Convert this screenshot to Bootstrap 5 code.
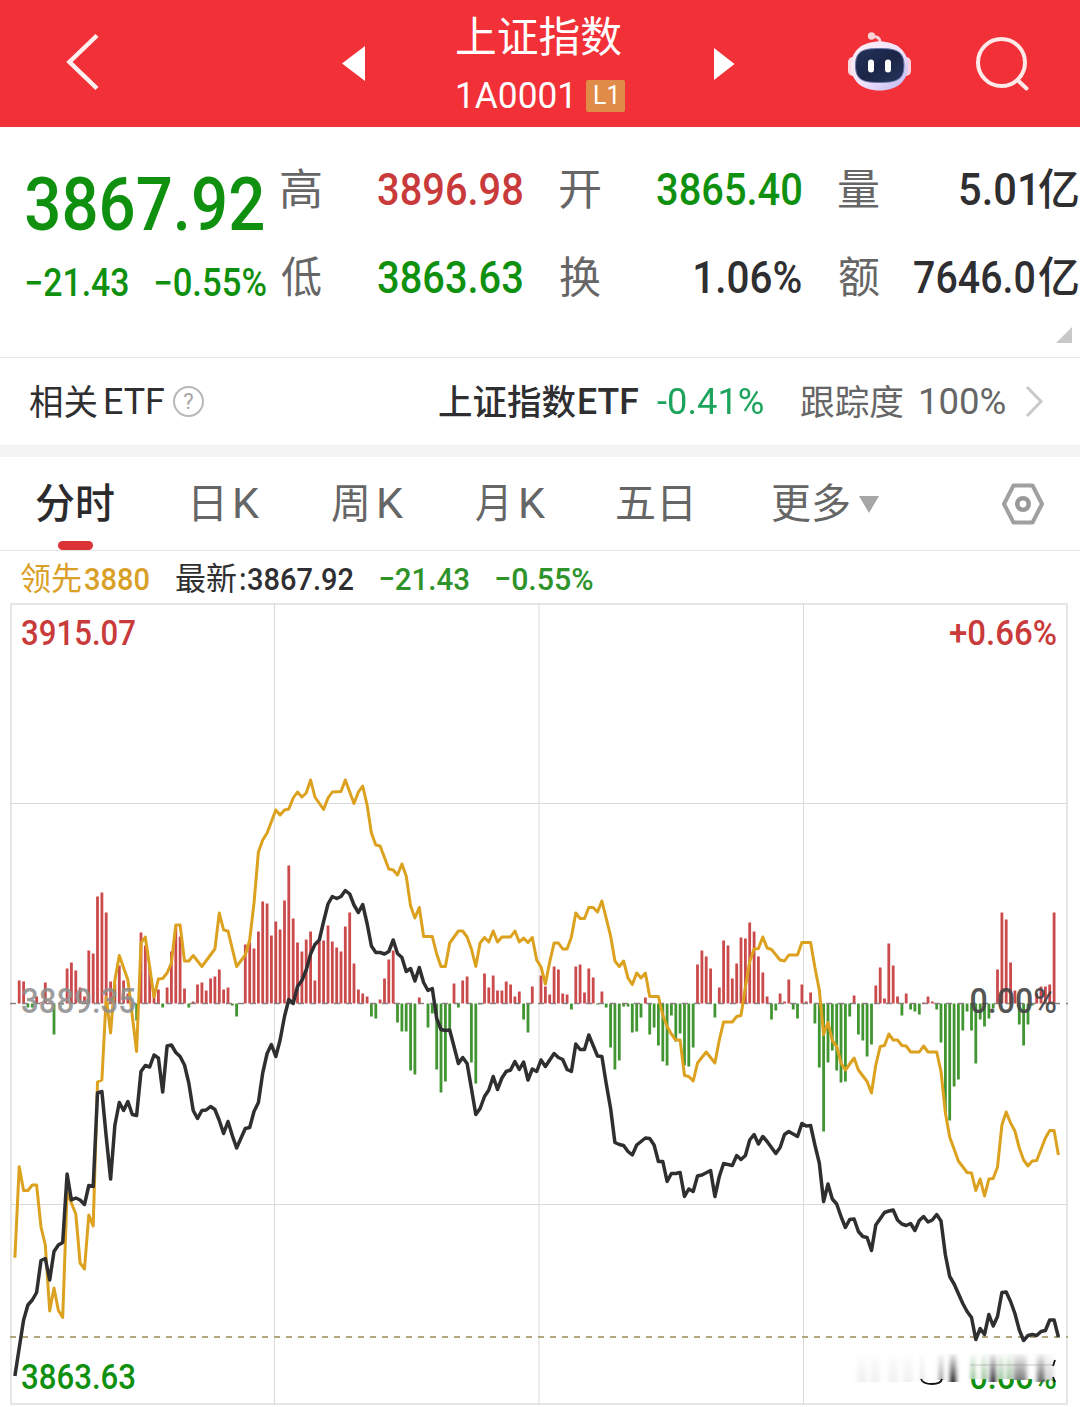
<!DOCTYPE html>
<html lang="zh-CN">
<head>
<meta charset="utf-8">
<meta name="viewport" content="width=device-width, initial-scale=1">
<title>上证指数 1A0001</title>
<link href="https://cdn.jsdelivr.net/npm/bootstrap@5.3.0/dist/css/bootstrap.min.css" rel="stylesheet">
<style>
  body { width: 1080px; height: 1407px; overflow: hidden; background: #fff; color: #2f2f31; font-family: Roboto, "Noto Sans CJK SC", sans-serif; }
  svg { display: block; flex: none; }
  .fit { display: block; flex: none; white-space: nowrap; line-height: 1.2; }
  .fit > span { display: inline-block; transform-origin: 0 50%; }
  .zh { font-family: "Noto Sans CJK SC", sans-serif; }
  .up { color: #c93a3b; }
  .down { color: #0f900f; }
  .muted { color: #666; }
  .topbar { height: 127px; background: #f23038; color: #fff; }
  .title-row { height: 74px; font-size: 42px; }
  .code-row { height: 46px; font-size: 36px; }
  .level { width: 40px; height: 32px; border-radius: 2px; background: #e08b47; font-size: 26px; margin-left: 16px; margin-top: -3px; }
  .quote { height: 230px; }
  .last-col { width: 281px; padding: 31px 0 0 26px; }
  .last-price { height: 92px; font-size: 75px; font-weight: 500; }
  .last-change { height: 68px; font-size: 38px; font-weight: 500; }
  .pair { height: 88px; font-size: 44px; font-weight: 500; }
  .pair .zh { font-size: 43px; font-weight: 400; }
  .stats { padding-top: 19px; }
  .stat-col { width: 241px; margin-right: 38px; }
  .corner { position: absolute; right: 8px; bottom: 14px; width: 16px; height: 16px; background: #c8c8c8; clip-path: polygon(100% 0, 100% 100%, 0 100%); }
  .etf { height: 88px; border-top: 1px solid #e9e9e9; font-size: 36px; padding: 3px 0 0 30px; }
  .etf .zh { font-size: 35px; }
  .help { width: 31px; height: 31px; border: 2px solid #b8b8b8; border-radius: 50%; color: #a5a5a5; font-size: 22px; margin: -3px 0 0 9px; }
  .band { height: 12px; background: #f4f4f4; }
  .tabs { height: 94px; border-bottom: 1px solid #e4e4e4; font-size: 43px; padding: 1px 0 0 36px; position: relative; }
  .tabs .zh { font-size: 41px; }
  .active-bar { position: absolute; left: 58px; bottom: 0; width: 35px; height: 9px; border-radius: 5px; background: #db3335; }
  .legend-row { height: 49px; padding: 7px 0 0 21px; font-size: 32px; font-weight: 500; }
  .legend-row .zh { font-size: 32px; font-weight: 400; }
  .lead-line { color: #d9a028; }
  .chart text { font: 500 35px Roboto, sans-serif; }
</style>
<script src="https://cdn.jsdelivr.net/npm/bootstrap@5.3.0/dist/js/bootstrap.bundle.min.js"></script>
</head>
<body>
<header class="topbar d-flex">
  <svg width="34" height="127" viewBox="66 0 34 127" style="margin-left:66px"><path d="M97 35.500 69.500 62 97 88.500" fill="none" stroke="#fff0f0" stroke-width="4.500"/></svg>
  <svg width="24" height="127" viewBox="342 0 24 127" style="margin-left:242px"><path d="M342 63.500 365 46V81Z" fill="#fff"/></svg>
  <div style="margin-left:91px;width:168px">
    <div class="title-row d-flex align-items-center"><span class="fit zh" data-w="164">上证指数</span></div>
    <div class="code-row d-flex align-items-center"><span class="fit" data-w="112" style="margin-left:1px">1A0001</span><span class="level d-flex align-items-center justify-content-center"><span class="fit" data-w="21">L1</span></span></div>
  </div>
  <svg width="22" height="127" viewBox="713 0 22 127" style="margin-left:88px"><path d="M714 48V80L734.500 64Z" fill="#fff"/></svg>
  <svg width="66" height="127" viewBox="846 0 66 127" style="margin-left:111px">
    <defs>
      <linearGradient id="shell" x1="0" y1="0" x2="1" y2="1"><stop offset="0" stop-color="#fff0f4"/><stop offset=".55" stop-color="#efe2fa"/><stop offset="1" stop-color="#b9b4f4"/></linearGradient>
      <linearGradient id="visor" x1="0" y1="0" x2="1" y2="1"><stop offset="0" stop-color="#24345c"/><stop offset=".5" stop-color="#1b2547"/><stop offset="1" stop-color="#27365c"/></linearGradient>
    </defs>
    <path d="M872 36.500q8-1 8.500 7" fill="none" stroke="#f7cfd8" stroke-width="3"/>
    <circle cx="871.500" cy="36" r="3.700" fill="#fbd3d8"/>
    <rect x="848" y="57" width="10" height="19" rx="5" fill="#fbd9e2"/>
    <rect x="901" y="57" width="10" height="19" rx="5" fill="#fbd0e0"/>
    <path d="M879.500 41.500C897 41.500 908 51 908 66S897 90.500 879.500 90.500 851 81 851 66 862 41.500 879.500 41.500Z" fill="url(#shell)"/>
    <path d="M879.500 48.500C896 48.500 904 51 904 65.500S896 82.500 879.500 82.500 855.500 80 855.500 65.500 863 48.500 879.500 48.500Z" fill="url(#visor)" stroke="#6d77ad"/>
    <rect x="868" y="59.500" width="6" height="13" rx="3" fill="#fff"/><rect x="885" y="59.500" width="6" height="13" rx="3" fill="#fff"/>
  </svg>
  <svg width="58" height="127" viewBox="974 0 58 127" style="margin-left:62px"><g fill="none" stroke="#ffe9e9" stroke-width="4"><circle cx="1001.500" cy="62.500" r="23.500"/><path d="M1017.500 80 1026.500 88.500" stroke-linecap="round"/></g></svg>
</header>

<section class="quote d-flex position-relative">
  <div class="last-col down">
    <div class="last-price d-flex align-items-center"><span class="fit" data-w="237">3867.92</span></div>
    <div class="last-change d-flex align-items-center"><span class="fit" data-w="102">−21.43</span><span class="fit" data-w="111" style="margin-left:27px">−0.55%</span></div>
  </div>
  <div class="stats d-flex">
    <div class="stat-col">
      <div class="pair d-flex align-items-center justify-content-between"><span class="fit zh muted" data-w="40">高</span><span class="fit up" data-w="144">3896.98</span></div>
      <div class="pair d-flex align-items-center justify-content-between"><span class="fit zh muted" data-w="40">低</span><span class="fit down" data-w="144">3863.63</span></div>
    </div>
    <div class="stat-col">
      <div class="pair d-flex align-items-center justify-content-between"><span class="fit zh muted" data-w="40">开</span><span class="fit down" data-w="144">3865.40</span></div>
      <div class="pair d-flex align-items-center justify-content-between"><span class="fit zh muted" data-w="40">换</span><span class="fit" data-w="106">1.06%</span></div>
    </div>
    <div style="width:239px">
      <div class="pair d-flex align-items-center"><span class="fit zh muted me-auto" data-w="40">量</span><span class="fit" data-w="73">5.01</span><span class="fit zh" data-w="39" style="margin-left:6px;font-weight:500">亿</span></div>
      <div class="pair d-flex align-items-center"><span class="fit zh muted me-auto" data-w="40">额</span><span class="fit" data-w="120">7646.0</span><span class="fit zh" data-w="39" style="margin-left:5px;font-weight:500">亿</span></div>
    </div>
  </div>
  <i class="corner"></i>
</section>

<section class="etf d-flex align-items-center">
  <span class="fit zh" data-w="67">相关</span><span class="fit" data-w="59" style="margin-left:8px">ETF</span>
  <span class="help d-flex align-items-center justify-content-center">?</span>
  <span class="fit zh" data-w="137" style="margin-left:235px;font-weight:500">上证指数</span><span class="fit" data-w="59" style="margin-left:3px;font-weight:500">ETF</span>
  <span class="fit" data-w="106" style="margin-left:19px;color:#1da45c">-0.41%</span>
  <span class="fit zh muted" data-w="102" style="margin-left:38px">跟踪度</span><span class="fit muted" data-w="84" style="margin-left:18px">100%</span>
  <svg width="20" height="34" style="margin:-3px 0 0 20px"><path d="M2 2 16 16.500 2 31" fill="none" stroke="#c9c9c9" stroke-width="3"/></svg>
</section>
<div class="band"></div>

<nav class="tabs d-flex align-items-center muted">
  <span class="fit zh" data-w="78" style="color:#2b2b2d;font-weight:500">分时</span>
  <span class="fit zh" data-w="28" style="margin-left:80px">日</span><span class="fit" data-w="24" style="margin-left:13px">K</span>
  <span class="fit zh" data-w="35" style="margin-left:73px">周</span><span class="fit" data-w="24" style="margin-left:12px">K</span>
  <span class="fit zh" data-w="30" style="margin-left:73px">月</span><span class="fit" data-w="24" style="margin-left:15px">K</span>
  <span class="fit zh" data-w="74" style="margin-left:72px">五日</span>
  <span class="fit zh" data-w="77" style="margin-left:81px">更多</span>
  <svg width="20" height="17" style="margin-left:10px"><path d="M0 0H20L10 17Z" fill="#a6a6a6"/></svg>
  <svg width="44" height="42" viewBox="0 0 44 42" style="margin-left:122px"><path d="M12.500 2.500H31.500L41 21 31.500 39.500H12.500L3 21Z" fill="none" stroke="#a0a0a0" stroke-width="4" stroke-linejoin="round"/><circle cx="22" cy="21" r="5.700" fill="none" stroke="#989898" stroke-width="4.600"/></svg>
  <i class="active-bar"></i>
</nav>

<div class="legend-row d-flex align-items-center">
  <span class="fit zh lead-line" data-w="60">领先</span><span class="fit lead-line" data-w="64" style="margin-left:4px">3880</span>
  <span class="fit zh" data-w="60" style="margin-left:27px">最新</span><span class="fit" data-w="5" style="margin-left:4px">:</span><span class="fit" data-w="105" style="margin-left:3px">3867.92</span>
  <span class="fit" data-w="89" style="margin-left:27px;color:#2f932c">−21.43</span><span class="fit" data-w="97" style="margin-left:27px;color:#2f932c">−0.55%</span>
</div>

<svg class="chart" width="1080" height="807" viewBox="0 600 1080 807">
  <defs>
    <linearGradient id="fadeDown" x1="0" y1="0" x2="0" y2="1"><stop offset="0" stop-color="#fff"/><stop offset=".15" stop-color="#fff" stop-opacity=".9"/><stop offset="1" stop-color="#fff" stop-opacity="0"/></linearGradient>
    <filter id="soft" x="-5%" y="-5%" width="110%" height="110%"><feGaussianBlur stdDeviation="2.200 .3"/></filter>
  </defs>
  <rect x="11" y="604" width="1056" height="800" fill="none" stroke="#e6e6e6" stroke-width="2"/>
  <path d="M274.500 604V1404M539 604V1404M803.500 604V1404M11 803.500H1067M11 1204.500H1067" stroke="#dadada" stroke-width="1" fill="none"/>
  <path id="barsUp" stroke="#cb4a4c" stroke-width="2.800" fill="none"/>
  <path id="barsDown" stroke="#429632" stroke-width="2.800" fill="none"/>
  <path d="M10 1003.500H1068" stroke="#8b7f7f" stroke-width="1.500" stroke-dasharray="6 6"/>
  <path d="M10 1337H1068" stroke="#b3a67c" stroke-width="2" stroke-dasharray="6 6"/>
  <path id="leadPath" stroke="#dca21f" stroke-width="3" fill="none" stroke-linejoin="round"/>
  <path id="pricePath" stroke="#2f2f31" stroke-width="3.500" fill="none" stroke-linejoin="round"/>
  <text x="21" y="645" textLength="115" lengthAdjust="spacingAndGlyphs" fill="#c93a3b">3915.07</text>
  <text x="949" y="645" textLength="108" lengthAdjust="spacingAndGlyphs" fill="#c93a3b">+0.66%</text>
  <text x="21" y="1013" textLength="115" lengthAdjust="spacingAndGlyphs" fill="#8f8f8f" fill-opacity=".88">3889.35</text>
  <text x="969.500" y="1013" textLength="87.500" lengthAdjust="spacingAndGlyphs" fill="#444" fill-opacity=".93">0.00%</text>
  <text x="21" y="1389" textLength="115" lengthAdjust="spacingAndGlyphs" fill="#0f900f">3863.63</text>
  <text x="969.500" y="1389" textLength="87.500" lengthAdjust="spacingAndGlyphs" fill="#0f900f">0.66%</text>
  <rect x="968" y="1352" width="90" height="27" fill="#fff"/>
  <g filter="url(#soft)">
    <path d="M862 1354V1382M875 1354V1382M893 1354V1382M908 1354V1382" stroke="#f0f0f0" stroke-width="9"/>
    <path d="M922 1354V1380" stroke="#ccc" stroke-width="2"/><path d="M941 1354V1380" stroke="#666" stroke-width="3"/>
    <path d="M953 1354V1382" stroke="#222" stroke-width="6"/>
    <path d="M973 1354V1379M984 1354V1379M1001 1354V1379M1009 1354V1379" stroke="#5fa05f" stroke-width="3.500"/>
    <path d="M993 1354V1382" stroke="#2b2530" stroke-width="6"/>
    <path d="M1020 1354V1380" stroke="#777" stroke-width="13"/>
    <path d="M1041 1354V1382" stroke="#666" stroke-width="8"/><path d="M1050 1354V1380" stroke="#ccc" stroke-width="6"/>
  </g>
  <rect x="850" y="1350" width="208" height="31" fill="url(#fadeDown)"/>
  <path d="M921 1379Q923 1384 932 1384T942 1379" stroke="#111" stroke-width="1.800" fill="none"/>
  <path d="M970 1365H1052" stroke="#777" stroke-opacity=".25" stroke-width="1.500"/>
  <path d="M1055 1360 1053 1366M1053 1377 1055 1382" stroke="#111" stroke-width="1.800"/>
</svg>

<script>
  // Minute volume strength, one value per minute: positive above the axis, negative below.
  const bars = [0,23,22,-4,-4,7,1,21,1,-31,0,-1,35,41,33,16,7,53,50,107,111,91,22,20,38,23,10,-3,-17,71,58,37,12,14,-4,16,52,77,67,15,-4,2,19,21,13,25,27,34,14,16,-2,-13,0,59,61,55,72,102,100,68,
    82,74,103,138,85,61,52,64,72,23,62,63,78,62,56,52,77,91,40,14,10,7,-13,-15,4,25,44,53,-19,-28,-28,-67,-71,6,0,-24,-10,-66,-89,-78,-28,20,-4,23,27,-59,-80,-1,30,16,28,13,13,22,19,7,12,-16,-29,17,
    0,28,17,9,37,34,10,9,-6,37,39,11,35,26,-1,12,-4,-44,-66,-57,-3,-3,-29,-28,-14,6,-31,-24,-42,-58,-62,-12,-38,-30,-62,-63,-44,39,53,47,35,-14,16,63,58,25,40,66,65,81,72,47,31,7,-16,-7,10,2,24,-6,
    -15,19,2,11,-20,-64,-128,-59,-47,-67,-79,-78,-13,8,-31,-37,-53,-41,18,36,5,60,38,7,-12,10,-6,-8,-11,1,7,2,-6,-39,-110,-117,-83,-76,-27,-8,-27,-60,-16,-23,-15,-5,34,91,84,41,13,-21,-42,-21,-2,10,17,17,19,91];
  // Lines are "minute:level" pairs.
  const lead = "0:1257.7 1:1166.7 2:1190.5 3:1190.5 4:1185 5:1185 6:1227 7:1245 8:1311 9:1288 10:1310.5 11:1317.5 12:1192 13:1203 14:1214 15:1263 16:1269 17:1215 18:1226 19:1082 20:1080 21:997 22:1033 23:980 24:955.5 26:980 28:1051.5 29:943 30:937 32:997 33:979 34:978.5 35:973 36:963 37:925 38:925 39:961 40:961 41:955.5 43:966.5 46:949 47:913 48:930 49:931 51:966.5 53:955 54:940 55:903 56:852 57:840 58:833 60:810 61:815 62:810 63:809 64:798 65:792 66:797 67:793 68:780 69:797 71:809.5 72:798 73:792 75:791.5 76:780 78:803.5 79:792 80:786 81:805 82:833 83:845 84:846 86:869 87:870 88:875 89:864 90:876 91:906 92:918 93:907.5 94:936.5 96:936.5 97:954 98:966.5 99:966.5 100:943 102:931 103:931 104:937 105:949 106:966.5 107:943 108:937.5 109:942 110:931 111:942 112:937 114:937 115:931 116:942 117:938 118:942.5 119:937.5 120:960 121:967 122:984 123:962 124:943 125:943 126:949 127:949 128:937 129:913 130:918.5 131:918.5 132:907.5 133:907.5 134:912 135:901 137:936 138:961 139:966.5 140:961 141:978 142:984.5 143:973 144:978 145:973 146:996.5 148:996.5 149:1015 150:1026.5 151:1034 152:1040 153:1040 154:1075.5 155:1076.5 156:1081 157:1063 159:1052 161:1063 162:1040 163:1022 165:1022 166:1016.5 167:1015.5 168:987 169:961.5 170:949 171:948.5 172:937 173:948 174:949.5 176:960 177:961 178:955 180:955 181:942.5 183:942.5 184:967.5 185:990 186:1034.5 187:1022.5 188:1040.5 189:1046.5 190:1063 191:1070 193:1058 194:1070 196:1081.5 197:1093 198:1065 199:1046.5 200:1045.5 201:1034 202:1040 203:1040 204:1045.5 205:1046 206:1052 208:1052 209:1046 210:1052 212:1052 213:1071.5 214:1113 215:1137 217:1161 219:1172.5 220:1173 221:1190.5 222:1179 223:1196 224:1179 225:1178.5 226:1167 227:1125 228:1112 229:1123 230:1131 231:1148 232:1160 233:1166 234:1161 235:1160.5 237:1138 238:1130.5 239:1130.5 240:1155";
  const price = "0:1376 1:1348 2:1320 3:1305 4:1300 5:1292.5 6:1260.5 7:1258.5 8:1280 9:1251.5 10:1245 11:1242.5 12:1174 13:1200 14:1198 15:1200 16:1204.5 17:1185.5 18:1186.5 19:1093 20:1091.5 21:1136.5 22:1179 23:1125 24:1102.5 25:1110.5 26:1101.5 27:1114.5 28:1115.5 29:1071.5 30:1065.5 31:1067 32:1055 33:1058 34:1092 35:1046 36:1045 37:1052.5 38:1056.5 39:1065 40:1083 41:1110.5 42:1118.5 43:1110.5 44:1110 45:1106.5 46:1109.5 47:1120.5 48:1133.5 49:1121.5 50:1135.5 51:1148 53:1128.5 54:1127.5 55:1111.5 56:1102.5 57:1073 58:1053.5 59:1044.5 60:1056.5 61:1040 62:1016.5 63:999.5 64:1003.5 65:986.5 66:980.5 67:970 68:954 69:944.5 70:940 71:921.5 72:904 73:896.5 74:898.5 75:896.5 76:890.5 77:894 78:905 79:912.5 80:904.5 81:923.5 82:946 83:952.5 84:952.5 85:954 86:951.5 87:940 88:953.5 89:957.5 90:971.5 91:968.5 92:981 93:967.5 94:982.5 95:990.5 96:988.5 97:1018.5 98:1029.5 99:1030.5 100:1030 101:1046.5 102:1063.5 103:1057.5 104:1063.5 105:1088.5 106:1114.5 107:1108.5 108:1096.5 109:1090 110:1076.5 111:1089.5 112:1078 113:1071.5 114:1070 115:1061.5 116:1069.5 117:1062 118:1080 119:1069 120:1071.5 121:1060 122:1066.5 124:1053.5 125:1057.5 126:1059.5 127:1069.5 128:1071.5 129:1044 130:1049.5 131:1049.5 132:1035 134:1056 135:1056.5 136:1083.5 137:1108.5 138:1142.5 139:1144.5 140:1145.5 141:1151.5 142:1155 143:1145 145:1138 146:1138.5 147:1145 148:1161.5 149:1161.5 150:1181.5 151:1173.5 152:1173.5 153:1172.5 154:1196.5 155:1189 156:1191.5 157:1176 158:1175 160:1170.5 161:1196.5 162:1176.5 163:1163.5 165:1165.5 166:1155.5 167:1159.5 168:1155.5 169:1140 170:1134.5 171:1144 172:1136.5 173:1141.5 175:1153.5 176:1147.5 177:1134.5 178:1131.5 180:1136.5 181:1123.5 182:1126 183:1125.5 184:1145 185:1163 186:1201.5 187:1184 188:1199 189:1204 190:1216.5 191:1227.5 192:1219.5 193:1219 194:1231.5 195:1236.5 196:1237.5 197:1250.5 198:1225 200:1212.5 201:1211 202:1210 203:1220 204:1224 205:1225.5 206:1223.5 207:1230.5 208:1220.5 209:1216.5 210:1222 211:1220 212:1214.5 213:1221 214:1255 215:1276.5 216:1284 218:1303.5 219:1311.5 220:1317.5 221:1339.5 222:1328.5 223:1334.5 224:1314.5 225:1326 226:1316.5 227:1292.5 228:1292 229:1301.5 230:1313.5 231:1330 232:1340.5 233:1335.5 234:1334.5 235:1335.5 236:1331.5 237:1330.5 238:1320 239:1320 240:1337";
  const xAt = i => (14.9 + 4.348 * i).toFixed(1);
  const line = s => "M" + s.split(" ").map(p => { const [i, y] = p.split(":"); return xAt(+i) + " " + y; }).join("L");
  const barPath = keep => bars.map((h, i) => keep(h) ? `M${xAt(i)} 1003.5V${1003.5 - h}` : "").join("");
  document.getElementById("barsUp").setAttribute("d", barPath(h => h > 0));
  document.getElementById("barsDown").setAttribute("d", barPath(h => h < 0));
  document.getElementById("leadPath").setAttribute("d", line(lead));
  document.getElementById("pricePath").setAttribute("d", line(price));

  // Condense each label so that its glyphs fill the width in data-w.
  const ctx = document.createElement("canvas").getContext("2d");
  document.querySelectorAll(".fit").forEach(el => {
    const cs = getComputedStyle(el), w = +el.dataset.w, inner = document.createElement("span");
    ctx.font = `${cs.fontWeight} ${cs.fontSize} ${cs.fontFamily}`;
    const m = ctx.measureText(el.textContent);
    const k = w / (m.actualBoundingBoxLeft + m.actualBoundingBoxRight);
    inner.textContent = el.textContent;
    el.replaceChildren(inner);
    el.style.width = w + "px";
    const dy = el.classList.contains("zh") ? -0.08 : 0;
    inner.style.transform = `translate(${(m.actualBoundingBoxLeft * k).toFixed(2)}px, ${dy}em) scaleX(${k.toFixed(4)})`;
  });
</script>
</body>
</html>
